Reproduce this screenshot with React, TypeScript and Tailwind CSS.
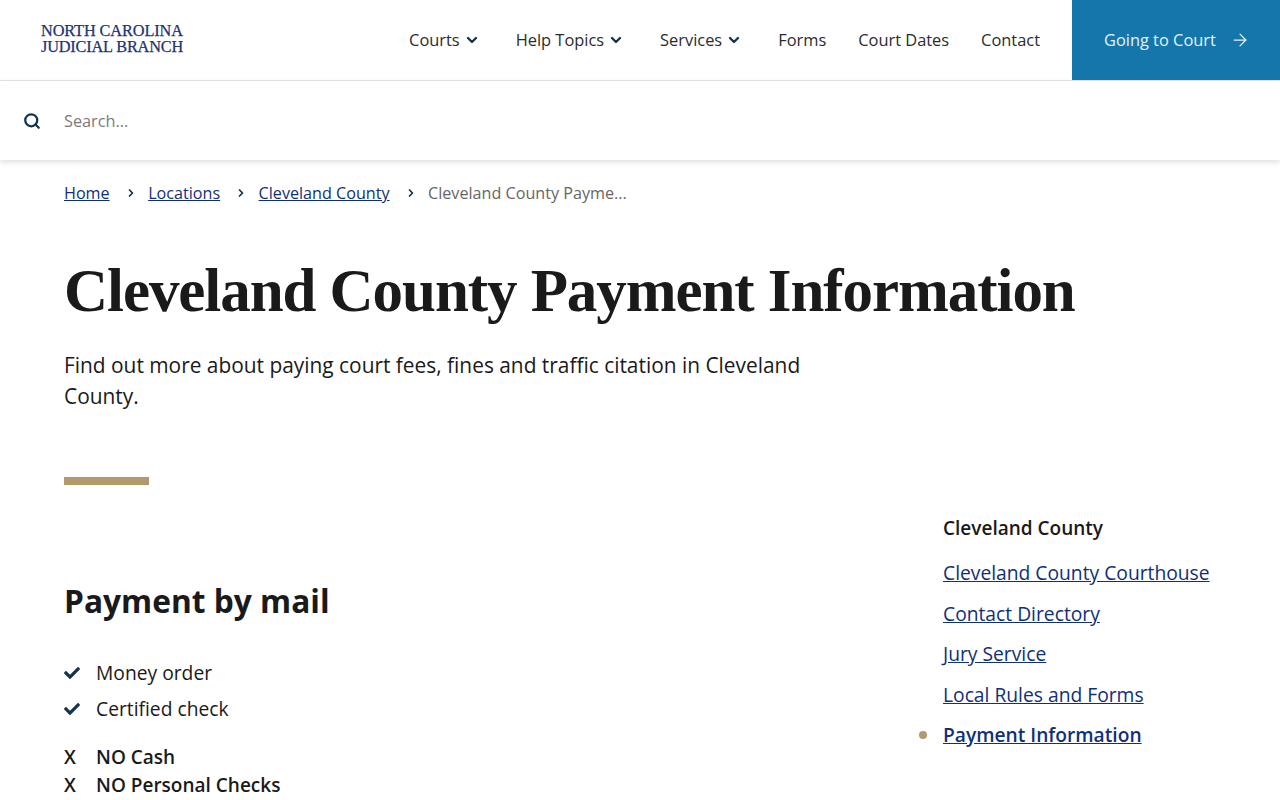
import { ChevronDown, ChevronRight, ArrowRight, Search } from 'lucide-react'
import { FaCheck } from 'react-icons/fa'

const navItems = [
  { label: 'Courts', menu: true },
  { label: 'Help Topics', menu: true },
  { label: 'Services', menu: true },
  { label: 'Forms', menu: false },
  { label: 'Court Dates', menu: false },
  { label: 'Contact', menu: false },
]

const crumbs = ['Home', 'Locations', 'Cleveland County']

const sideLinks = [
  'Cleveland County Courthouse',
  'Contact Directory',
  'Jury Service',
  'Local Rules and Forms',
]

export default function App() {
  return (
    <div className="h-[800px] overflow-hidden bg-white font-['Open_Sans',sans-serif] text-[#1a1a1a]">
      {/* Header */}
      <header className="flex h-[81px] items-start border-b border-[#e6e6e6]">
        <a className="ml-[41px] mt-[23px] block font-['Liberation_Serif',serif] text-[16.3px] leading-[16px] text-[#1c3474] [-webkit-text-stroke:0.25px_#1c3474]">
          <span className="block tracking-[-0.1px]">NORTH CAROLINA</span>
          <span className="block tracking-[-0.17px]">JUDICIAL BRANCH</span>
        </a>
        <nav className="ml-auto flex h-20 items-center gap-8 pr-8 text-[16.4px] text-[#2b2b2b]">
          {navItems.map((item) => (
            <a key={item.label} className={item.menu ? 'flex items-center gap-1 pr-1' : 'flex items-center'}>
              {item.label}
              {item.menu && <ChevronDown className="h-4 w-4 text-[#12344d]" strokeWidth={3.5} />}
            </a>
          ))}
        </nav>
        <a className="flex h-20 w-52 items-center gap-[14px] bg-[#1476ab] pl-8 text-[16.4px] text-[#e3f3fb]">
          Going to Court
          <ArrowRight className="h-5 w-5" strokeWidth={1.5} />
        </a>
      </header>

      {/* Search */}
      <div className="flex h-[79px] items-center gap-[23px] pl-[23px] pt-px shadow-[0_2px_6px_rgba(0,0,0,0.14)]">
        <Search className="h-[18px] w-[18px] text-[#12344d]" strokeWidth={3} />
        <span className="text-[16.3px] text-[#7a7a7a]">Search...</span>
      </div>

      <main className="px-16">
        {/* Breadcrumb */}
        <div className="mt-[21px] flex items-center gap-[11.5px] text-[16.15px] leading-6">
          {crumbs.map((crumb) => (
            <div key={crumb} className="flex items-center gap-[15px]">
              <a className="text-[#10307a] underline">{crumb}</a>
              <ChevronRight className="h-3 w-3 text-[#12344d]" strokeWidth={3.5} />
            </div>
          ))}
          <span className="text-[#666666]">Cleveland County Payme...</span>
        </div>

        <h1 className="mt-[50px] font-['Liberation_Serif',serif] text-[61px] font-bold leading-[72px] tracking-[-1.06px] text-[#1a1a1a]">
          Cleveland County Payment Information
        </h1>

        <p className="mt-[23px] w-[760px] text-[20.88px] leading-[31px]">
          Find out more about paying court fees, fines and traffic citation in Cleveland County.
        </p>

        <div className="mt-[65px] h-2 w-[85px] bg-[#b09a6e]" />

        <div className="flex justify-between">
          <section className="pt-[92px]">
            <h2 className="text-[31.7px] font-bold leading-[48px]">Payment by mail</h2>
            <ul className="mt-[34px] flex flex-col gap-2 text-[19.25px] leading-[28px]">
              {['Money order', 'Certified check'].map((t) => (
                <li key={t} className="flex items-center gap-4">
                  <FaCheck className="h-4 w-4 text-[#12344d]" />
                  {t}
                </li>
              ))}
            </ul>
            <ul className="mt-5 text-[19px] font-semibold leading-[28px]">
              {['NO Cash', 'NO Personal Checks'].map((t) => (
                <li key={t} className="flex">
                  <span className="w-8">X</span>
                  {t}
                </li>
              ))}
            </ul>
          </section>

          <aside className="w-[273px] pt-[29px]">
            <h3 className="text-[19px] font-semibold leading-7">Cleveland County</h3>
            <ul className="mt-4 flex flex-col gap-[10px] text-[19.25px] leading-[30.5px] text-[#10307a]">
              {sideLinks.map((link) => (
                <li key={link}>
                  <a className="underline">{link}</a>
                </li>
              ))}
              <li className="relative text-[19.2px] font-semibold">
                <span className="absolute left-[-24px] top-[11px] h-2 w-2 rounded-full bg-[#b09a6e]" />
                <a className="underline">Payment Information</a>
              </li>
            </ul>
          </aside>
        </div>
      </main>
    </div>
  )
}
